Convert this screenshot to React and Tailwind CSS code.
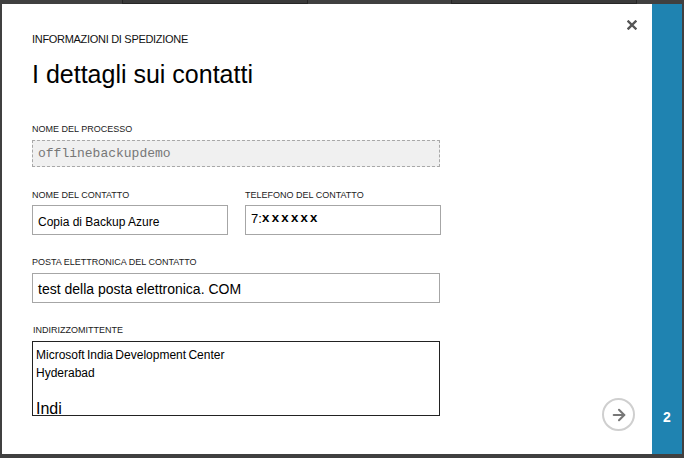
import { ArrowRight } from 'lucide-react';

const SANS = "font-['Liberation_Sans',Arial,sans-serif]";
const MONO = "font-['Liberation_Mono','Courier_New',monospace]";

function Label({ children, className = '' }) {
  return (
    <div className={`text-[9px] leading-[9px] text-[#222] uppercase whitespace-nowrap ${className}`}>
      {children}
    </div>
  );
}

function TopStrip() {
  return (
    <div className="h-[4px] flex">
      <div className="w-[122px]" />
      <div className="w-[186px] h-[4px] bg-[#3a3a3a] border-x border-b border-[#262626]" />
      <div className="w-[143px]" />
      <div className="w-[186px] h-[4px] bg-[#3a3a3a] border-x border-b border-[#262626]" />
    </div>
  );
}

function CloseIcon() {
  return (
    <svg width="10" height="10" viewBox="0 0 10 10">
      <path d="M1.5 1.5 L8.5 8.5 M8.5 1.5 L1.5 8.5" stroke="#555" strokeWidth="2.4" strokeLinecap="square" />
    </svg>
  );
}

export default function App() {
  return (
    <div className={`w-[684px] h-[458px] bg-[#404040] flex flex-col ${SANS}`}>
      <TopStrip />
      <div className="flex h-[450px] pl-[2px]">
        {/* dialog */}
        <div className="w-[650px] bg-white flex">
          <div className="w-[440px] pl-[30px] pt-[30px] flex flex-col">
            <div className="text-[11px] leading-[11px] text-[#111] tracking-[-0.3px]">INFORMAZIONI DI SPEDIZIONE</div>
            <h1 className="mt-[17px] text-[25px] leading-[25px] text-black">I dettagli sui contatti</h1>

            <Label className="mt-[38px]">Nome del processo</Label>
            <div className={`mt-[6px] h-[27px] w-[408px] bg-[#f0f0f0] border border-dashed border-[#a8a8a8] flex items-center pl-[5px] pt-[1px] text-[13px] text-[#777] ${MONO}`}>
              offlinebackupdemo
            </div>

            <div className="mt-[24px] flex gap-[17px]">
              <div className="w-[196px] flex flex-col">
                <Label>Nome del contatto</Label>
                <div className="mt-[5px] h-[30px] border border-[#a6a6a6] flex items-center pl-[5px] pt-[3px] text-[12px] text-black">
                  Copia di Backup Azure
                </div>
              </div>
              <div className="w-[196px] flex flex-col">
                <Label>Telefono del contatto</Label>
                <div className="mt-[5px] h-[30px] border border-[#a6a6a6] flex items-center pl-[5px] pb-[2px] text-black">
                  <span className="text-[13px]">7:</span>
                  <span className={`text-[13px] tracking-[1.8px] font-bold ${MONO}`}>xxxxxx</span>
                </div>
              </div>
            </div>

            <Label className="mt-[23px]">Posta elettronica del contatto</Label>
            <div className="mt-[6px] h-[30px] w-[408px] border border-[#a6a6a6] flex items-center pl-[5px] pt-[3px] text-[14px] text-black">
              test della posta elettronica. COM
            </div>

            <Label className="mt-[23px] pl-[1px]">Indirizzomittente</Label>
            <div className="mt-[6px] h-[75px] w-[408px] border border-[#222] overflow-hidden pl-[3px] pt-[4px] text-black">
              <div className="text-[12px] leading-[18px] [word-spacing:-1px]">Microsoft India Development Center</div>
              <div className="text-[12px] leading-[18px]">Hyderabad</div>
              <div className="h-[19px]" />
              <div className="text-[16px] leading-[16px]">Indi</div>
            </div>
          </div>

          <div className="flex-1 flex flex-col items-end justify-between pt-[16px] pb-[23px]">
            <button className="mr-[15px] w-[10px] h-[10px] flex items-center justify-center">
              <CloseIcon />
            </button>
            <button className="mr-[17px] w-[33px] h-[33px] rounded-full border-2 border-[#cfcfcf] flex items-center justify-center">
              <ArrowRight size={18} strokeWidth={2.8} color="#777" />
            </button>
          </div>
        </div>

        {/* step bar */}
        <div className="w-[30px] bg-[#1f83b1] flex flex-col justify-end items-center pb-[30px]">
          <span className="text-[14px] leading-[14px] font-bold text-white">2</span>
        </div>
        <div className="w-[2px]" />
      </div>
      <div className="h-[4px]" />
    </div>
  );
}
